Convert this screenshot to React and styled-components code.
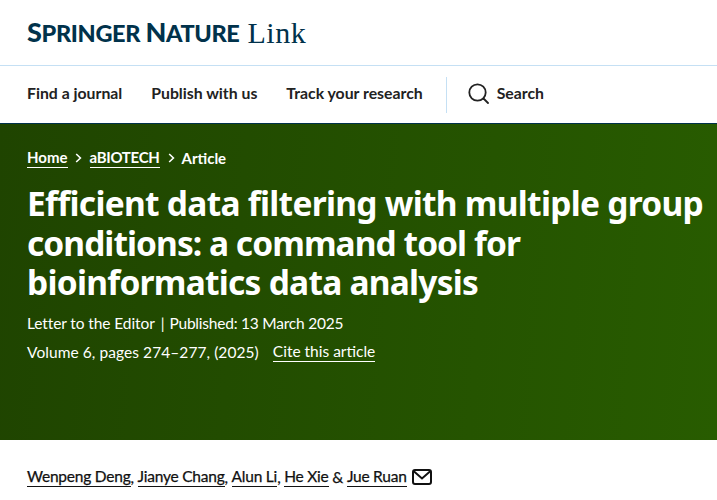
import React from "react";
import styled, { createGlobalStyle } from "styled-components";

const Global = createGlobalStyle`
  html, body { margin: 0; padding: 0; background: #fff; overflow: hidden; }
  body { font-family: "Lato", "Noto Sans", sans-serif; width: 717px; height: 500px; }
`;

const Page = styled.div`width: 717px; height: 500px; overflow: hidden;`;

const Brand = styled.header`
  height: 65px;
  box-sizing: border-box;
  padding: 0 0 0 27px;
  display: flex;
  align-items: center;
  gap: 8px;
  color: #01324b;
`;
const Wordmark = styled.span`
  font: 900 23.5px/1 "Lato", sans-serif;
  text-transform: uppercase;
  letter-spacing: -0.35px;
  white-space: nowrap;
  margin-top: -1px;
`;
const BigCap = styled.span`font-size: 27px;`;
const LinkMark = styled.span`
  font: 400 30px/1 "Liberation Serif", serif;
  letter-spacing: 0.55px;
  margin-top: 1px;
`;

const Nav = styled.nav`
  height: 59px;
  box-sizing: border-box;
  border-top: 1px solid #c5e0f4;
  border-bottom: 1px solid #01324b;
  padding: 0 0 3px 27px;
  display: flex;
  align-items: center;
`;
const NavLink = styled.a`
  font: 700 15.8px/1 "Lato", sans-serif;
  color: #222;
  margin-right: ${p => p.$gap}px;
  white-space: nowrap;
`;
const Divider = styled.span`
  width: 1px;
  height: 36px;
  background: #c5e0f4;
  margin: 3px 21px 0 23px;
`;
const SearchBtn = styled.a`
  display: flex;
  align-items: center;
  gap: 8px;
  font: 700 15.8px/1 "Lato", sans-serif;
  color: #222;
`;

const Hero = styled.section`
  height: 316px;
  box-sizing: border-box;
  padding: 24px 0 0 27px;
  color: #fff;
  background: linear-gradient(95deg, #1f4400 0%, #285c00 100%);
`;
const Crumbs = styled.ol`
  list-style: none;
  margin: 0;
  padding: 0;
  display: flex;
  align-items: center;
  gap: 7px;
  font: 700 15px/20px "Lato", sans-serif;
`;
const Crumb = styled.li`
  display: flex;
  align-items: center;
  margin-left: ${p => p.$indent || 0}px;
  letter-spacing: ${p => p.$track || 0}px;
`;
const Under = styled.a`
  color: inherit;
  text-decoration: none;
  border-bottom: 1px solid currentColor;
  line-height: 19px;
  display: inline-block;
`;
const Title = styled.h1`
  margin: 16px 0 0;
  font: 700 33.5px/39.5px "Noto Sans", sans-serif;
  white-space: nowrap;
`;
const TitleLine = styled.span`
  display: block;
  letter-spacing: ${p => p.$track}px;
`;
const Meta = styled.div`
  margin-top: ${p => p.$top}px;
  display: flex;
  align-items: center;
  font: 400 15.5px/20px "Lato", sans-serif;
  white-space: nowrap;
`;
const Tight = styled.span`letter-spacing: ${p => p.$track}px;`;
const Sep = styled.span`margin: 0 5px 0 6px; font-size: 15px;`;
const Cite = styled(Under)`margin-left: 14px;`;

const Authors = styled.div`
  padding: 27px 0 0 27px;
  display: flex;
  align-items: center;
  font: 400 15.5px/20px "Lato", sans-serif;
  letter-spacing: -0.22px;
  color: #111;
  -webkit-text-stroke: 0.25px #111;
  white-space: pre;
`;
const Author = styled.a`
  color: inherit;
  border-bottom: 1px solid #111;
  line-height: 19px;
  display: inline-block;
`;
const Mail = styled.svg`margin-left: 5px;`;

const Chevron = () => (
  <svg width="7" height="10" viewBox="0 0 7 10" fill="none" stroke="#fff" strokeWidth="1.6">
    <path d="M1.2 1 L5.4 5 L1.2 9" />
  </svg>
);

export default function App() {
  return (
    <Page>
      <Global />
      <Brand>
        <Wordmark><BigCap>S</BigCap>pringer <BigCap>N</BigCap>ature</Wordmark>
        <LinkMark>Link</LinkMark>
      </Brand>
      <Nav>
        <NavLink $gap={29}>Find a journal</NavLink>
        <NavLink $gap={29}>Publish with us</NavLink>
        <NavLink $gap={0}>Track your research</NavLink>
        <Divider />
        <SearchBtn>
          <svg width="21" height="21" viewBox="0 0 21 21" fill="none" stroke="#222" strokeWidth="1.8">
            <circle cx="9.5" cy="9.5" r="8.2" />
            <path d="M15.5 15.5 L20 20" strokeLinecap="round" />
          </svg>
          Search
        </SearchBtn>
      </Nav>
      <Hero>
        <Crumbs>
          <Crumb><Under>Home</Under></Crumb>
          <Crumb><Chevron /></Crumb>
          <Crumb $indent={1} $track={-0.3}><Under>aBIOTECH</Under></Crumb>
          <Crumb $indent={1}><Chevron /></Crumb>
          <Crumb>Article</Crumb>
        </Crumbs>
        <Title>
          <TitleLine $track={-0.72}>Efficient data filtering with multiple group</TitleLine>
          <TitleLine $track={-0.95}>conditions: a command tool for</TitleLine>
          <TitleLine $track={-0.75}>bioinformatics data analysis</TitleLine>
        </Title>
        <Meta $top={10}>
          <Tight $track={-0.1}>Letter to the Editor</Tight>
          <Sep>|</Sep>
          <Tight $track={-0.22}>Published: 13 March 2025</Tight>
        </Meta>
        <Meta $top={9}>
          <Tight $track={0.07}>Volume 6, pages 274–277, (2025)</Tight>
          <Cite>Cite this article</Cite>
        </Meta>
      </Hero>
      <Authors>
        <Author>Wenpeng Deng</Author>, <Author>Jianye Chang</Author>, <Author>Alun Li</Author>, <Author>He Xie</Author> &amp; <Author>Jue Ruan</Author>
        <Mail width="20" height="16" viewBox="0 0 20 16" fill="none" stroke="#111" strokeWidth="2">
          <rect x="1" y="1" width="18" height="14" rx="2" />
          <path d="M1.5 2 L10 9.5 L18.5 2" />
        </Mail>
      </Authors>
    </Page>
  );
}
